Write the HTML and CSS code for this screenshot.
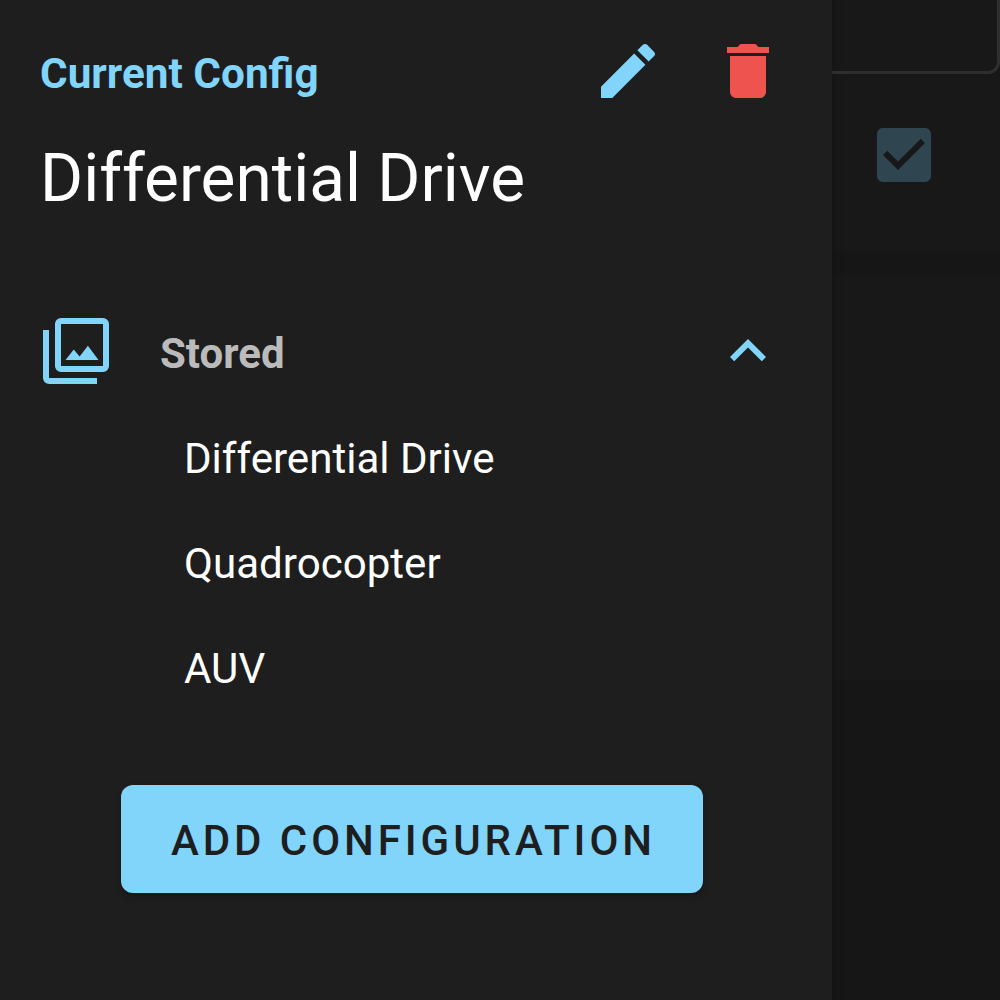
FILE: index.html
```html
<!DOCTYPE html>
<html lang="en">
<head>
<meta charset="utf-8">
<title>Configurations</title>
<link rel="stylesheet" href="styles.css">
</head>
<body>
<div class="app">
  <nav class="drawer">
    <header class="current">
      <span class="current-label">Current Config</span>
      <button class="icon-button" aria-label="Edit"><svg class="icon" viewBox="0 0 24 24"><path d="M20.71,7.04C21.1,6.65 21.1,6 20.71,5.63L18.37,3.29C18,2.9 17.35,2.9 16.96,3.29L15.12,5.12L18.87,8.87M3,17.25V21H6.75L17.81,9.93L14.06,6.18L3,17.25Z"/></svg></button>
      <button class="icon-button danger" aria-label="Delete"><svg class="icon" viewBox="0 0 24 24"><path d="M19,4H15.5L14.5,3H9.5L8.5,4H5V6H19M6,19A2,2 0 0,0 8,21H16A2,2 0 0,0 18,19V7H6V19Z"/></svg></button>
    </header>
    <h1 class="title">Differential Drive</h1>
    <div class="group">
      <svg class="icon" viewBox="0 0 24 24"><path d="M21,17H7V3H21M21,1H7A2,2 0 0,0 5,3V17A2,2 0 0,0 7,19H21A2,2 0 0,0 23,17V3A2,2 0 0,0 21,1M3,5H1V21A2,2 0 0,0 3,23H19V21H3M15.96,10.29L13.21,13.83L11.25,11.47L8.5,15H19.5L15.96,10.29Z"/></svg>
      <span class="group-label">Stored</span>
      <svg class="icon" viewBox="0 0 24 24"><path d="M7.41,15.41L12,10.83L16.59,15.41L18,14L12,8L6,14L7.41,15.41Z"/></svg>
    </div>
    <ul class="items">
      <li class="item">Differential Drive</li>
      <li class="item">Quadrocopter</li>
      <li class="item">AUV</li>
    </ul>
    <button class="add">Add Configuration</button>
  </nav>
  <main class="page">
    <div class="field"></div>
    <svg class="icon checkbox" viewBox="0 0 24 24"><path d="M10,17L5,12L6.41,10.58L10,14.17L17.59,6.58L19,8M19,3H5C3.89,3 3,3.89 3,5V19A2,2 0 0,0 5,21H19A2,2 0 0,0 21,19V5C21,3.89 20.1,3 19,3Z"/></svg>
    <div class="gap"></div>
    <div class="panel"></div>
  </main>
</div>
</body>
</html>
```
FILE: styles.css
```css
* {
  box-sizing: border-box;
}

body {
  margin: 0;
  font-family: Roboto, "Liberation Sans", sans-serif;
  background: #161616;
  color: #fff;
}

button {
  padding: 0;
  border: 0;
  background: none;
  font: inherit;
  color: inherit;
}

.app {
  display: flex;
  width: 1000px;
  height: 1000px;
  overflow: hidden;
}

.drawer {
  display: flex;
  flex-direction: column;
  flex: 0 0 832px;
  background: #1e1e1e;
}

.icon {
  display: block;
  flex: none;
  width: 72px;
  height: 72px;
  fill: #81d4fa;
}

.current {
  display: flex;
  align-items: center;
  gap: 48px;
  height: 72px;
  margin: 35px 48px 0 40px;
}

.current-label {
  flex: 1;
  padding-top: 6px;
  font-size: 42.3px;
  font-weight: 700;
  line-height: 60px;
  color: #81d4fa;
}

.danger .icon {
  fill: #ef5350;
}

.title {
  margin: 24px 40px 0;
  font-size: 65.75px;
  font-weight: 400;
  line-height: 96px;
}

.group {
  display: flex;
  align-items: center;
  gap: 48px;
  margin: 88px 48px 0 40px;
}

.group-label {
  flex: 1;
  padding-top: 6px;
  font-size: 42px;
  font-weight: 700;
  line-height: 60px;
  color: #bbb;
}

.items {
  margin: 19px 0 0;
  padding: 0 0 0 184px;
  list-style: none;
}

.item {
  height: 105px;
  font-size: 42.1px;
  line-height: 105px;
}

.add {
  width: 582px;
  height: 108px;
  margin: 64px 0 0 121px;
  padding: 4px 0 0 3px;
  border-radius: 12px;
  background: #81d4fa;
  box-shadow: 0 3px 6px rgba(0, 0, 0, 0.3);
  color: #1e1e1e;
  font-size: 42px;
  font-weight: 500;
  line-height: 104px;
  letter-spacing: 3.92px;
  text-transform: uppercase;
}

.page {
  flex: 1;
  background: linear-gradient(90deg, rgba(0, 0, 0, 0.16), rgba(0, 0, 0, 0.04) 6px, transparent 22px), #181818;
}

.field {
  height: 74px;
  border: solid #2e2e2e;
  border-width: 0 3px 3px 0;
  border-bottom-right-radius: 12px;
}

.checkbox {
  margin: 45px 0 0 36px;
  fill: #2f4650;
}

.gap {
  height: 24px;
  margin-top: 60px;
  background: rgba(0, 0, 0, 0.08);
}

.panel {
  height: 320px;
  margin-top: 405px;
  background: rgba(0, 0, 0, 0.08);
}
```
